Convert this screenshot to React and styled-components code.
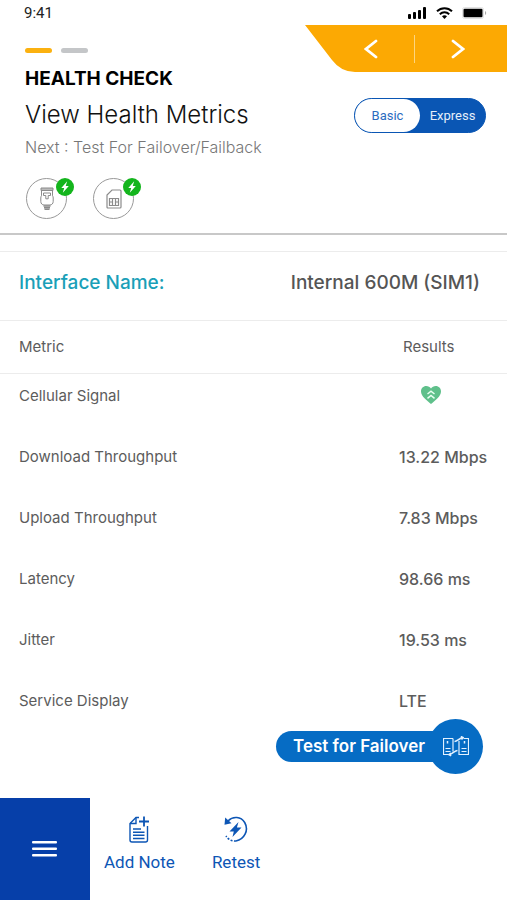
import { useState } from 'react'
import styled, { createGlobalStyle } from 'styled-components'

const metrics = [
  { name: 'Cellular Signal', icon: true },
  { name: 'Download Throughput', value: '13.22 Mbps' },
  { name: 'Upload Throughput', value: '7.83 Mbps' },
  { name: 'Latency', value: '98.66 ms' },
  { name: 'Jitter', value: '19.53 ms' },
  { name: 'Service Display', value: 'LTE' },
]

const SignalIcon = () => (
  <svg width="19" height="12" viewBox="0 0 19 12" fill="#000">
    <rect x="0" y="7" width="3" height="5" rx="1" />
    <rect x="5" y="5" width="3" height="7" rx="1" />
    <rect x="10" y="3" width="3" height="9" rx="1" />
    <rect x="15" y="0" width="3" height="12" rx="1" />
  </svg>
)

const WifiIcon = () => (
  <svg width="17" height="12" viewBox="0 0 17 12" fill="none" stroke="#000" strokeWidth="2">
    <path d="M1 4.3C5.2.2 11.8.2 16 4.3" />
    <path d="M3.8 7.2c2.7-2.5 6.7-2.5 9.4 0" />
    <path d="M8.5 12 6 9.3c1.4-1.3 3.6-1.3 5 0z" fill="#000" stroke="none" />
  </svg>
)

const BatteryIcon = () => (
  <svg width="25" height="12" viewBox="0 0 25 12">
    <rect x=".5" y=".5" width="21" height="11" rx="2" fill="none" stroke="#e2e2e2" />
    <rect x="1.5" y="1.7" width="19" height="8.6" rx="1" fill="#000" />
    <path d="M23 4v4c1.6-.5 1.6-3.5 0-4z" fill="#aaa" />
  </svg>
)

const Chevron = ({ right }) => (
  <svg width="14" height="20" viewBox="0 0 14 20" fill="none" stroke="#fff" strokeWidth="2.8" strokeLinecap="round">
    <path d={right ? 'M2 2l10 8-10 8' : 'M12 2L2 10l10 8'} />
  </svg>
)

const BoltIcon = () => (
  <svg width="8" height="12" viewBox="0 0 8 12" fill="#fff">
    <path d="M6.2.2.3 7h2.9L1.8 11.8 7.8 4.9H4.7z" />
  </svg>
)

const ConnectorIcon = () => (
  <svg width="14" height="24" viewBox="0 0 14 24" fill="none" stroke="#8b8b8b">
    <path d="M1 1h12v2.5H1z" fill="#bbb" />
    <path d="M1.5 3.5v5.3Q.8 9.500.8 11v3.500c0 2 1.500 3.500 3.200 3.500h6c1.700 0 3.200-1.500 3.200-3.500V11q0-1.500-.7-2.200V3.500" />
    <path d="M3.5 6h7v2.500H8.200v3.300H5.800V8.500H3.500z" />
    <path d="M3.5 19h7M4 20.700h6M4.500 22.400h5" strokeWidth="1.4" />
  </svg>
)

const SimIcon = () => (
  <svg width="16" height="20" viewBox="0 0 16 20" fill="none" stroke="#8b8b8b" strokeWidth="1.2">
    <path d="M6 1h8q1 0 1 1v16q0 1-1 1H2q-1 0-1-1V6z" />
    <path d="M3.5 9.5h9v7h-9zM6.5 9.5v7M9.5 9.5v7M3.5 13h3M9.5 13h3" />
  </svg>
)

const HeartIcon = () => (
  <svg width="20" height="18" viewBox="0 0 20 18" role="img" aria-label="Good">
    <path d="M10 18C6 14.3 0 10.5 0 5.4 0 2.3 2.3 0 5.2 0 7.3 0 9 1 10 2.6 11 1 12.7 0 14.8 0 17.7 0 20 2.3 20 5.4 20 10.5 14 14.3 10 18z" fill="#5fc08b" />
    <path d="M6.5 8 10 5.2 13.500 8M6.5 12.300 10 9.500l3.500 2.800" fill="none" stroke="#e9fff2" strokeWidth="1.5" />
  </svg>
)

const FailoverIcon = () => (
  <svg width="26" height="21" viewBox="0 0 26 21" fill="none" stroke="#e3f1ff" strokeWidth="1.2">
    <path d="M10 2.5H.5v16h5M10 2.5v13M16 5v13.5h9.5v-16h-5" />
    <path d="M2.5 12.5h5M2.5 15.5h5M18.5 12.5h5M18.5 15.5h5" />
    <path d="M4.5 5v2.500M21.5 5v2.500" strokeWidth="1.5" />
    <path d="M11.5 5.5c3 0 4-3 8-3.8M17.8.5l2.2 1-1.5 2M14.5 14.5c-3 0-4 3-8 4M8 17l-2 1.6 2.2 1.2" strokeWidth="1.6" />
  </svg>
)

const MenuIcon = () => (
  <svg width="26" height="18" viewBox="0 0 26 18" fill="#fff">
    <rect y="1" width="25" height="2.6" rx="1" />
    <rect y="7.5" width="25" height="2.6" rx="1" />
    <rect y="14" width="25" height="2.6" rx="1" />
  </svg>
)

const NoteIcon = () => (
  <svg width="20" height="27" viewBox="0 0 20 27" fill="none" stroke="#0d56b5" strokeWidth="1.4">
    <path d="M10 1.5H7L1 7.5V24q0 2 2 2h13.500q2 0 2-2V10" />
    <path d="M7 1.5v6H1" />
    <path d="M15 .5v10M10 5.500h10" strokeWidth="1.8" />
    <path d="M4 13h8M4 16.200h11.500M4 19.300h11.500M4 22.500h11.500" />
  </svg>
)

const RetestIcon = () => (
  <svg width="24" height="27" viewBox="0 0 24 27" fill="none" stroke="#0d56b5" strokeWidth="1.6">
    <path d="M4 5C9-.2 17 .5 20.7 6.500c4.600 8-.7 17-8.700 18.500" />
    <path d="M12 25C7.5 25.3 4 23.3 2 20" strokeDasharray="2 1.5" />
    <path d="M1.200 1.500 7.500 7.300.5 8.800z" fill="#0d56b5" stroke="none" />
    <path d="M14.5 6 5.5 15.500h4.300L8.500 21 17.500 11.500h-4.600z" fill="#0d56b5" stroke="none" />
  </svg>
)

const App = () => {
  const [mode, setMode] = useState('basic')

  return (<>
    <GlobalStyle />
    <Screen>
      <StatusBar>
        <span>9:41</span>
        <StatusIcons>
          <SignalIcon />
          <WifiIcon />
          <BatteryIcon />
        </StatusIcons>
      </StatusBar>

      <Header>
        <Intro>
          <Steps>
            <Step $active />
            <Step />
          </Steps>
          <Eyebrow>HEALTH CHECK</Eyebrow>
          <Title>View Health Metrics</Title>
          <Next>Next : Test For Failover/Failback</Next>
          <Devices>
            <Device>
              <ConnectorIcon />
              <Badge><BoltIcon /></Badge>
            </Device>
            <Device>
              <SimIcon />
              <Badge><BoltIcon /></Badge>
            </Device>
          </Devices>
        </Intro>

        <Side>
          <Pager aria-label="Steps">
            <PagerButton aria-label="Previous"><Chevron /></PagerButton>
            <PagerButton aria-label="Next"><Chevron right /></PagerButton>
          </Pager>
          <Toggle role="radiogroup" aria-label="Mode">
            <Option $active={mode === 'basic'}>
              <input
                type="radio"
                name="mode"
                checked={mode === 'basic'}
                onChange={() => setMode('basic')} />
              Basic
            </Option>
            <Option $active={mode === 'express'}>
              <input
                type="radio"
                name="mode"
                checked={mode === 'express'}
                onChange={() => setMode('express')} />
              Express
            </Option>
          </Toggle>
        </Side>
      </Header>

      <Main>
        <Interface>
          <dt>Interface Name:</dt>
          <dd>Internal 600M (SIM1)</dd>
        </Interface>

        <Table>
          <thead>
            <tr>
              <th scope="col">Metric</th>
              <th scope="col">Results</th>
            </tr>
          </thead>
          <tbody>
            {metrics.map(({ name, value, icon }) => (
              <tr key={name}>
                <th scope="row">{name}</th>
                <Result $icon={icon}>{icon ? <HeartIcon /> : value}</Result>
              </tr>
            ))}
          </tbody>
        </Table>

        <Failover>
          <span>Test for Failover</span>
          <Knob><FailoverIcon /></Knob>
        </Failover>
      </Main>

      <Footer>
        <MenuButton aria-label="Menu"><MenuIcon /></MenuButton>
        <Action><NoteIcon />Add Note</Action>
        <Action><RetestIcon />Retest</Action>
      </Footer>
    </Screen>
  </>)
}

const GlobalStyle = createGlobalStyle`
  * {
    box-sizing: border-box;
  }

  body {
    margin: 0;
    background-color: #fff;
    font-family: Inter, 'Liberation Sans', sans-serif;
  }

  button {
    margin: 0;
    padding: 0;
    border: none;
    background: none;
    font: inherit;
    cursor: pointer;
  }

  svg {
    display: block;
    flex-shrink: 0;
  }
`

const Screen = styled.div`
  display: flex;
  flex-direction: column;
  min-height: 100vh;
`

const StatusBar = styled.div`
  display: flex;
  align-items: center;
  justify-content: space-between;
  height: 25px;
  padding: 0 20px 0 24px;
  font-family: Roboto, sans-serif;
  font-size: 15px;
  color: #222;
`

const StatusIcons = styled.div`
  display: flex;
  align-items: center;
  gap: 9px;
`

const Header = styled.header`
  display: flex;
  justify-content: space-between;
  border-bottom: 2px solid #c8c8c8;
`

const Intro = styled.div`
  padding: 23px 0 14px 25px;
  white-space: nowrap;
`

const Steps = styled.div`
  display: flex;
  gap: 9px;
`

const Step = styled.span`
  width: 27px;
  height: 5px;
  border-radius: 3px;
  background-color: ${({ $active }) => $active ? '#fbb110' : '#c4c6c8'};
`

const Eyebrow = styled.p`
  margin: 14px 0 0;
  font-size: 19px;
  line-height: 24px;
  font-weight: 700;
  color: #000;
`

const Title = styled.h1`
  margin: 8px 0 0;
  font-size: 24px;
  line-height: 32px;
  font-weight: 300;
  color: #111;
`

const Next = styled.p`
  margin: 4px 0 0;
  font-size: 16px;
  line-height: 24px;
  font-weight: 300;
  color: #777;
`

const Devices = styled.div`
  display: flex;
  gap: 26px;
  padding: 19px 0 0 1px;
`

const Device = styled.div`
  position: relative;
  display: flex;
  align-items: center;
  justify-content: center;
  width: 41px;
  height: 41px;
  border: 1px solid #999;
  border-radius: 50%;
`

const Badge = styled.span`
  position: absolute;
  top: -1px;
  right: -8px;
  display: flex;
  align-items: center;
  justify-content: center;
  width: 18px;
  height: 18px;
  border-radius: 50%;
  background-color: #14b51d;
`

const Side = styled.div`
  display: flex;
  flex-direction: column;
  align-items: flex-end;
  gap: 26px;
`

const Pager = styled.nav`
  display: flex;
  align-items: center;
  width: 202px;
  height: 47px;
  padding-left: 23px;
  background-color: #fca903;
  clip-path: path('M0 0H202V47H50Q36 47 27 35z');
`

const PagerButton = styled.button`
  display: flex;
  align-items: center;
  justify-content: center;
  width: 86px;
  height: 28px;

  & + & {
    border-left: 1px solid #fdd57f;
  }
`

const Toggle = styled.div`
  display: flex;
  height: 35px;
  margin-right: 21px;
  border: 1px solid #0a56b4;
  border-radius: 18px;
  background-color: #0a56b4;
`

const Option = styled.label`
  display: flex;
  align-items: center;
  justify-content: center;
  width: 65px;
  border-radius: 17px;
  background-color: ${({ $active }) => $active ? '#fff' : 'transparent'};
  color: ${({ $active }) => $active ? '#2c6cbf' : '#e4eefa'};
  font-family: Roboto, sans-serif;
  font-size: 13px;
  cursor: pointer;

  input {
    position: absolute;
    opacity: 0;
    pointer-events: none;
  }
`

const Main = styled.main`
  position: relative;
  flex: 1;
  padding-top: 16px;
`

const Interface = styled.dl`
  display: flex;
  align-items: center;
  justify-content: space-between;
  height: 69px;
  margin: 0;
  padding: 0 27px 8px 19px;
  border-top: 1px solid #ececec;
  font-size: 19px;
  font-weight: 500;
  color: #555;

  dt {
    color: #1a9fb8;
  }

  dd {
    margin: 0;
  }
`

const Table = styled.table`
  width: 100%;
  border-collapse: collapse;
  font-size: 16px;
  line-height: 22px;
  color: #5c5c5c;

  th {
    padding: 11px 0 0 19px;
    font-size: 15px;
    font-weight: 400;
    text-align: left;
    vertical-align: top;
  }

  thead tr {
    height: 53px;
    border-top: 1px solid #ececec;
    border-bottom: 1px solid #ececec;
  }

  thead th {
    padding-top: 0;
    vertical-align: middle;
  }

  thead th:last-child {
    width: 108px;
    padding-left: 4px;
  }

  tbody tr {
    height: 61px;
  }
`

const Result = styled.td`
  padding: ${({ $icon }) => $icon ? '12px 0 0 22px' : '11px 0 0'};
  font-weight: 500;
  vertical-align: top;
  white-space: nowrap;
`

const Failover = styled.button`
  position: absolute;
  right: 24px;
  bottom: 24px;
  display: flex;
  align-items: center;

  span:first-child {
    height: 31px;
    margin-right: -8px;
    padding: 0 11px 0 17px;
    border-radius: 16px 0 0 16px;
    background-color: #066cc4;
    color: #fff;
    font-size: 17px;
    line-height: 31px;
    font-weight: 600;
  }
`

const Knob = styled.span`
  display: flex;
  align-items: center;
  justify-content: center;
  width: 55px;
  height: 55px;
  border-radius: 50%;
  background-color: #066cc4;
`

const Footer = styled.footer`
  display: flex;
  height: 102px;
`

const MenuButton = styled.button`
  display: flex;
  align-items: center;
  justify-content: center;
  width: 90px;
  background-color: #063fa9;
`

const Action = styled.button`
  display: flex;
  flex-direction: column;
  align-items: center;
  gap: 8px;
  margin-left: 14px;
  padding-top: 18px;
  color: #0d56b5;
  font-family: Roboto, sans-serif;
  font-size: 17px;
  line-height: 22px;

  & + & {
    margin-left: 37px;
  }
`

export default App
